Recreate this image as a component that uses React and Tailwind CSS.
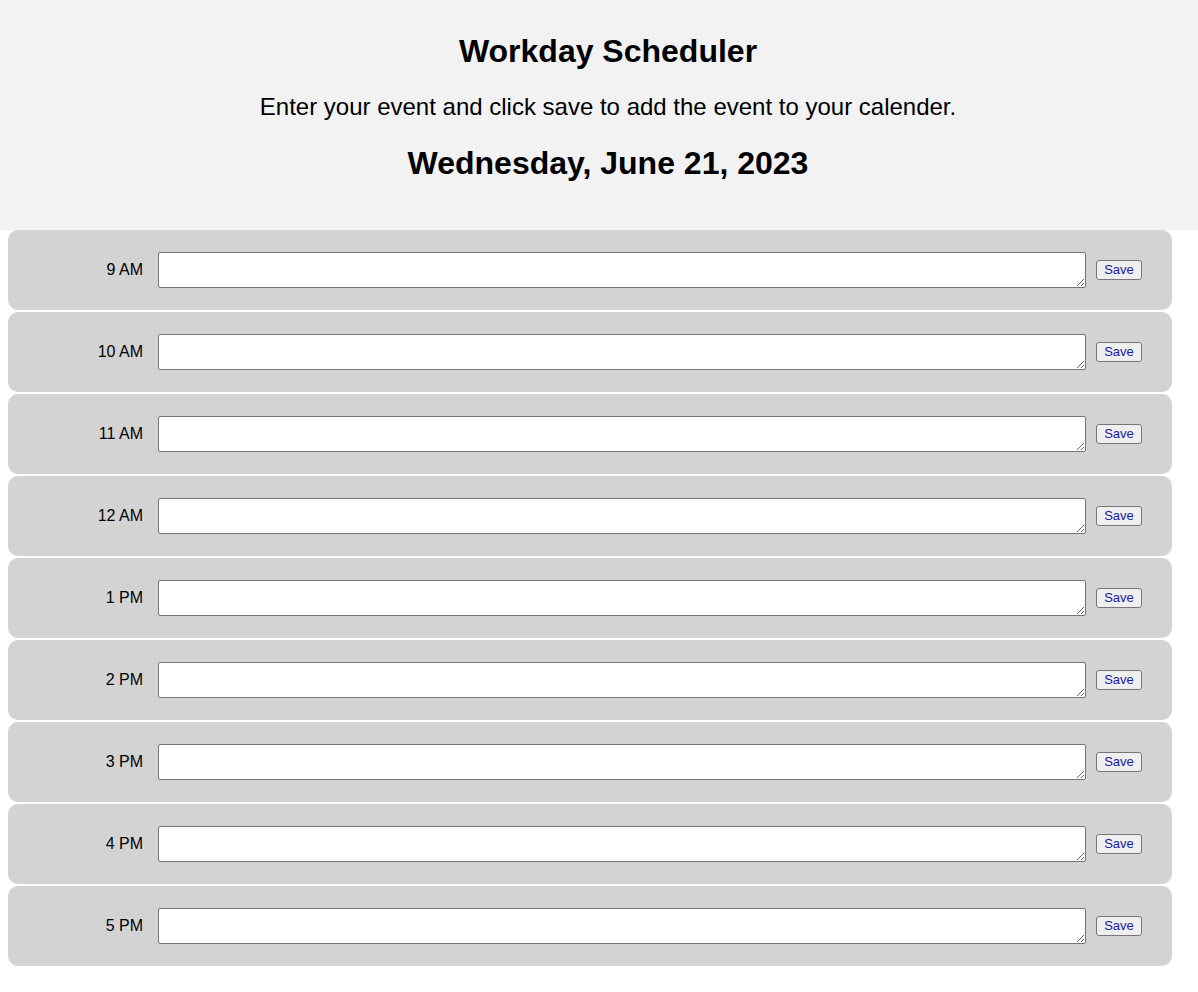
import React from "react";

const hours = ["9 AM", "10 AM", "11 AM", "12 AM", "1 PM", "2 PM", "3 PM", "4 PM", "5 PM"];

export default function App() {
  return (
    <div className="min-h-[992px] bg-white text-black" style={{ fontFamily: '"Liberation Sans", Arial, sans-serif' }}>
      <header className="h-[230px] bg-[#f2f2f2] pl-[18px] flex flex-col items-center">
        <h1 className="mt-[33px] text-[32px] leading-[37px] font-bold">Workday Scheduler</h1>
        <p className="mt-[23px] text-[24px] leading-[28px]">Enter your event and click save to add the event to your calender.</p>
        <h2 className="mt-[24px] text-[32px] leading-[37px] font-bold">Wednesday, June 21, 2023</h2>
      </header>
      <div className="ml-2 w-[1164px] flex flex-col gap-[2px]">
        {hours.map((h) => (
          <div key={h} className="h-[80px] bg-[#d3d3d3] rounded-[10px] flex items-center">
            <div className="w-[135px] text-right text-[16px]">{h}</div>
            <textarea className="ml-[15px] w-[928px] h-[36px] bg-white border border-[#767676] rounded-[2px] resize-y align-middle" />
            <button className="ml-[10px] h-[20px] w-[46px] text-[13px] leading-[16px] text-[#1a1aa6] bg-[#efefef] border border-[#767676] rounded-[3px]">Save</button>
          </div>
        ))}
      </div>
    </div>
  );
}
